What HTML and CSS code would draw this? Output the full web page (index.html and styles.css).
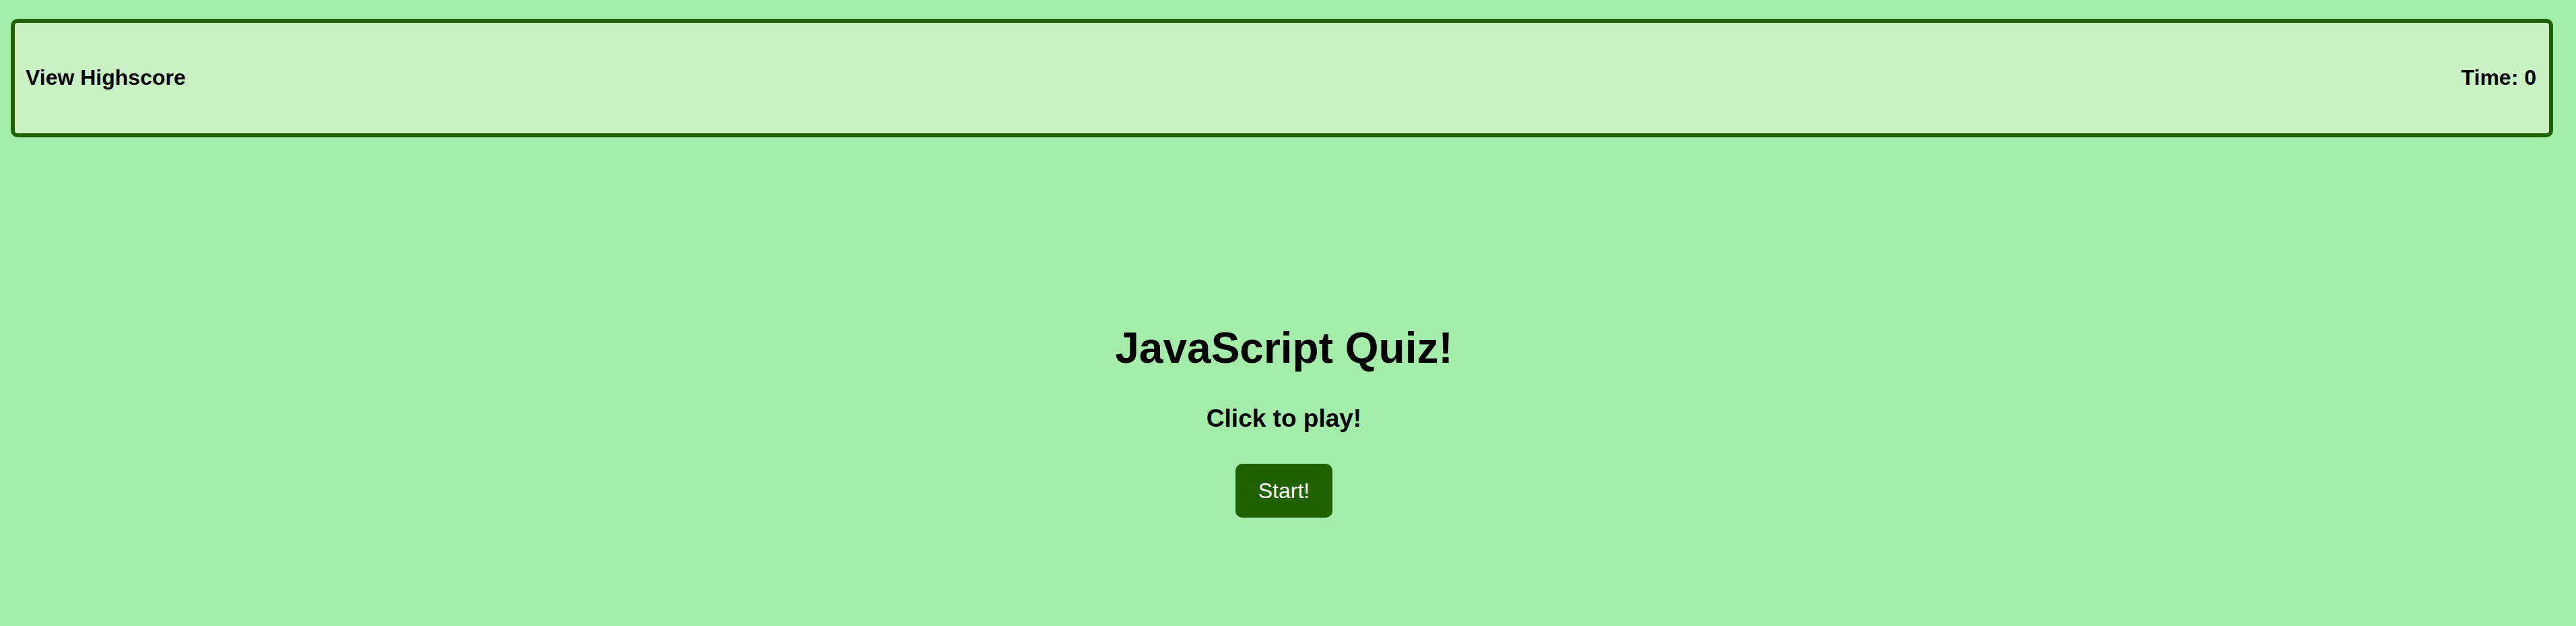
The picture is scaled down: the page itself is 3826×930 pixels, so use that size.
FILE: index.html
```html
<!DOCTYPE html>
<html lang="en">
<head>
<meta charset="utf-8">
<title>JavaScript Quiz</title>
<link rel="stylesheet" href="styles.css">
</head>
<body>
<header class="topbar">
  <span class="highscore">View Highscore</span>
  <span class="timer">Time: 0</span>
</header>
<main class="intro">
  <h1 class="title">JavaScript Quiz!</h1>
  <h2 class="subtitle">Click to play!</h2>
  <button class="start-btn">Start!</button>
</main>
</body>
</html>
```

FILE: styles.css
```css
html, body {
  margin: 0;
  padding: 0;
}
body {
  background: #a4eca9;
  font-family: "Liberation Sans", Arial, sans-serif;
  color: #000;
  height: 930px;
  overflow: hidden;
}
.topbar {
  margin: 28px 34px 0 16px;
  height: 161px;
  border: 6px solid #216200;
  border-radius: 10px;
  background: #c9f1c4;
  display: flex;
  justify-content: space-between;
  align-items: center;
  padding: 0 19px 3px 16px;
  box-sizing: content-box;
}
.highscore, .timer {
  font-size: 32px;
  font-weight: bold;
  line-height: 1;
}
.intro {
  display: flex;
  flex-direction: column;
  align-items: center;
  padding: 281px 12px 0 0;
}
.title {
  margin: 0;
  font-size: 64px;
  line-height: 64px;
  font-weight: bold;
}
.subtitle {
  margin: 55px 0 0 0;
  font-size: 37px;
  line-height: 36px;
  font-weight: bold;
}
.start-btn {
  margin: 49px 0 0 0;
  width: 144px;
  height: 80px;
  background: #216200;
  color: #fff;
  border: none;
  border-radius: 10px;
  font-family: "Liberation Sans", Arial, sans-serif;
  font-size: 32px;
  padding: 0;
}
```
